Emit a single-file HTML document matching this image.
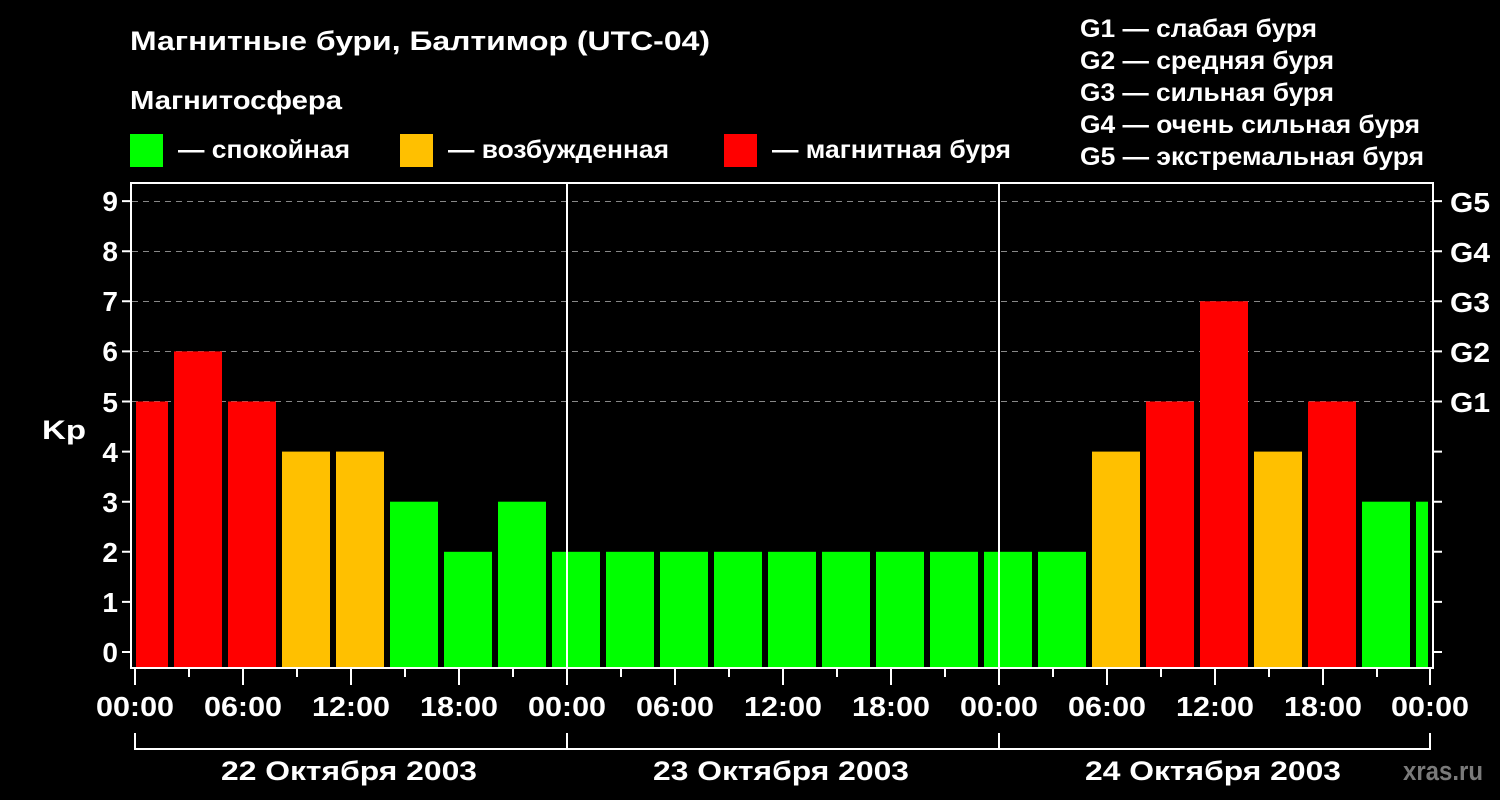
<!DOCTYPE html>
<html><head><meta charset="utf-8"><style>
html,body{margin:0;padding:0;background:#000;width:1500px;height:800px;overflow:hidden}
svg text{font-family:"Liberation Sans",sans-serif;font-weight:bold;fill:#fff}
</style></head><body>
<svg width="1500" height="800" xmlns="http://www.w3.org/2000/svg">
<rect width="1500" height="800" fill="#000"/>
<text x="130" y="50" font-size="27" textLength="580" lengthAdjust="spacingAndGlyphs">Магнитные бури, Балтимор (UTC-04)</text>
<text x="130" y="109" font-size="26" textLength="212" lengthAdjust="spacingAndGlyphs">Магнитосфера</text>
<rect x="130" y="134" width="33" height="33" fill="#00ff00"/>
<text x="178" y="158" font-size="25" textLength="172" lengthAdjust="spacingAndGlyphs">— спокойная</text>
<rect x="400" y="134" width="33" height="33" fill="#ffc000"/>
<text x="448" y="158" font-size="25" textLength="221" lengthAdjust="spacingAndGlyphs">— возбужденная</text>
<rect x="724" y="134" width="33" height="33" fill="#ff0000"/>
<text x="772" y="158" font-size="25" textLength="239" lengthAdjust="spacingAndGlyphs">— магнитная буря</text>
<g font-size="25">
<text x="1080" y="37" textLength="237" lengthAdjust="spacingAndGlyphs">G1 — слабая буря</text>
<text x="1080" y="69" textLength="254" lengthAdjust="spacingAndGlyphs">G2 — средняя буря</text>
<text x="1080" y="101" textLength="254" lengthAdjust="spacingAndGlyphs">G3 — сильная буря</text>
<text x="1080" y="133" textLength="340" lengthAdjust="spacingAndGlyphs">G4 — очень сильная буря</text>
<text x="1080" y="165" textLength="344" lengthAdjust="spacingAndGlyphs">G5 — экстремальная буря</text>
</g>
<g stroke="#888" stroke-width="1" stroke-dasharray="6,5">
<line x1="132" y1="201.5" x2="1433" y2="201.5"/>
<line x1="132" y1="251.5" x2="1433" y2="251.5"/>
<line x1="132" y1="301.5" x2="1433" y2="301.5"/>
<line x1="132" y1="351.5" x2="1433" y2="351.5"/>
<line x1="132" y1="401.5" x2="1433" y2="401.5"/>
</g>
<g>
<rect x="136" y="401.5" width="32" height="266.5" fill="#ff0000"/>
<rect x="174" y="351.4" width="48" height="316.6" fill="#ff0000"/>
<rect x="228" y="401.5" width="48" height="266.5" fill="#ff0000"/>
<rect x="282" y="451.6" width="48" height="216.4" fill="#ffc000"/>
<rect x="336" y="451.6" width="48" height="216.4" fill="#ffc000"/>
<rect x="390" y="501.7" width="48" height="166.3" fill="#00ff00"/>
<rect x="444" y="551.8" width="48" height="116.2" fill="#00ff00"/>
<rect x="498" y="501.7" width="48" height="166.3" fill="#00ff00"/>
<rect x="552" y="551.8" width="48" height="116.2" fill="#00ff00"/>
<rect x="606" y="551.8" width="48" height="116.2" fill="#00ff00"/>
<rect x="660" y="551.8" width="48" height="116.2" fill="#00ff00"/>
<rect x="714" y="551.8" width="48" height="116.2" fill="#00ff00"/>
<rect x="768" y="551.8" width="48" height="116.2" fill="#00ff00"/>
<rect x="822" y="551.8" width="48" height="116.2" fill="#00ff00"/>
<rect x="876" y="551.8" width="48" height="116.2" fill="#00ff00"/>
<rect x="930" y="551.8" width="48" height="116.2" fill="#00ff00"/>
<rect x="984" y="551.8" width="48" height="116.2" fill="#00ff00"/>
<rect x="1038" y="551.8" width="48" height="116.2" fill="#00ff00"/>
<rect x="1092" y="451.6" width="48" height="216.4" fill="#ffc000"/>
<rect x="1146" y="401.5" width="48" height="266.5" fill="#ff0000"/>
<rect x="1200" y="301.3" width="48" height="366.7" fill="#ff0000"/>
<rect x="1254" y="451.6" width="48" height="216.4" fill="#ffc000"/>
<rect x="1308" y="401.5" width="48" height="266.5" fill="#ff0000"/>
<rect x="1362" y="501.7" width="48" height="166.3" fill="#00ff00"/>
<rect x="1416" y="501.7" width="12" height="166.3" fill="#00ff00"/>
</g>
<g stroke="#fff" stroke-width="2">
<line x1="567" y1="183" x2="567" y2="668"/>
<line x1="999" y1="183" x2="999" y2="668"/>
</g>
<rect x="131" y="183" width="1302" height="485" fill="none" stroke="#fff" stroke-width="2"/>
<path stroke="#fff" stroke-width="2" fill="none" d="M122 652H131M122 601.9H131M122 551.8H131M122 501.7H131M122 451.6H131M122 401.5H131M122 351.4H131M122 301.3H131M122 251.2H131M122 201.1H131
M1433 652H1442M1433 601.9H1442M1433 551.8H1442M1433 501.7H1442M1433 451.6H1442M1433 401.5H1442M1433 351.4H1442M1433 301.3H1442M1433 251.2H1442M1433 201.1H1442
M135 668V685M243 668V685M351 668V685M459 668V685M567 668V685M675 668V685M783 668V685M891 668V685M999 668V685M1107 668V685M1215 668V685M1323 668V685M1430 668V685
M189 668V677M297 668V677M405 668V677M513 668V677M621 668V677M729 668V677M837 668V677M945 668V677M1053 668V677M1161 668V677M1269 668V677M1377 668V677"/>
<g font-size="28" text-anchor="end">
<text x="118" y="662">0</text><text x="118" y="612">1</text><text x="118" y="562">2</text><text x="118" y="512">3</text><text x="118" y="462">4</text><text x="118" y="412">5</text><text x="118" y="361">6</text><text x="118" y="311">7</text><text x="118" y="261">8</text><text x="118" y="211">9</text>
</g>
<text x="42" y="439" font-size="27" textLength="44" lengthAdjust="spacingAndGlyphs">Kp</text>
<g font-size="28">
<text x="1450" y="212" textLength="40" lengthAdjust="spacingAndGlyphs">G5</text><text x="1450" y="262" textLength="40" lengthAdjust="spacingAndGlyphs">G4</text><text x="1450" y="312" textLength="40" lengthAdjust="spacingAndGlyphs">G3</text><text x="1450" y="362" textLength="40" lengthAdjust="spacingAndGlyphs">G2</text><text x="1450" y="412" textLength="40" lengthAdjust="spacingAndGlyphs">G1</text>
</g>
<g font-size="28">
<text x="96" y="716" textLength="78" lengthAdjust="spacingAndGlyphs">00:00</text><text x="204" y="716" textLength="78" lengthAdjust="spacingAndGlyphs">06:00</text><text x="312" y="716" textLength="78" lengthAdjust="spacingAndGlyphs">12:00</text><text x="420" y="716" textLength="78" lengthAdjust="spacingAndGlyphs">18:00</text>
<text x="528" y="716" textLength="78" lengthAdjust="spacingAndGlyphs">00:00</text><text x="636" y="716" textLength="78" lengthAdjust="spacingAndGlyphs">06:00</text><text x="744" y="716" textLength="78" lengthAdjust="spacingAndGlyphs">12:00</text><text x="852" y="716" textLength="78" lengthAdjust="spacingAndGlyphs">18:00</text>
<text x="960" y="716" textLength="78" lengthAdjust="spacingAndGlyphs">00:00</text><text x="1068" y="716" textLength="78" lengthAdjust="spacingAndGlyphs">06:00</text><text x="1176" y="716" textLength="78" lengthAdjust="spacingAndGlyphs">12:00</text><text x="1284" y="716" textLength="78" lengthAdjust="spacingAndGlyphs">18:00</text>
<text x="1391" y="716" textLength="78" lengthAdjust="spacingAndGlyphs">00:00</text>
</g>
<path stroke="#fff" stroke-width="2" fill="none" d="M135 733V749H1430V733M567 733V749M999 733V749"/>
<g font-size="27">
<text x="221" y="780" textLength="256" lengthAdjust="spacingAndGlyphs">22 Октября 2003</text>
<text x="653" y="780" textLength="256" lengthAdjust="spacingAndGlyphs">23 Октября 2003</text>
<text x="1085" y="780" textLength="256" lengthAdjust="spacingAndGlyphs">24 Октября 2003</text>
</g>
<text x="1403" y="780" font-size="27" textLength="80" lengthAdjust="spacingAndGlyphs" style="fill:#7a7a7a">xras.ru</text>
</svg>
</body></html>
